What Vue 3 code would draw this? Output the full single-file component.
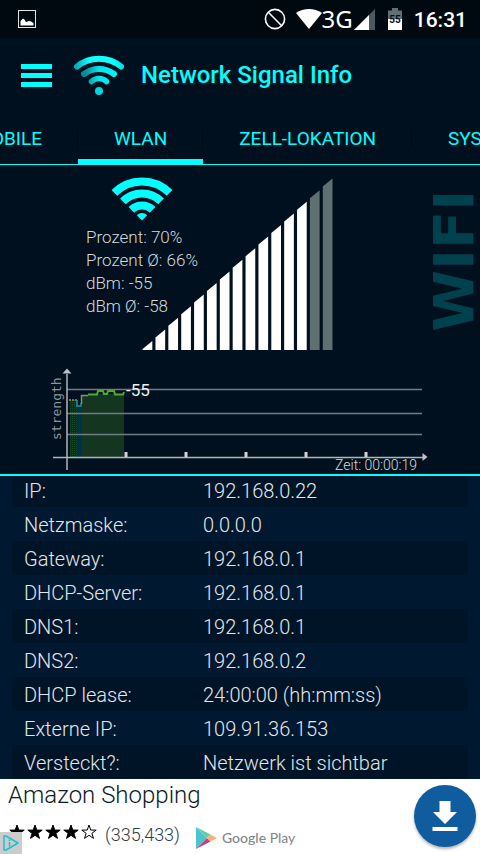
<template>
  <div class="app">
    <div class="status-bar">
      <svg class="status-picture" width="18" height="18" viewBox="0 0 18 18">
        <rect x="0.5" y="0.5" width="17" height="17" fill="none" stroke="#dfe5e8" />
        <path d="M2.500 15.500V11L5 8.500L6.500 9.500L8 12L11 11L13 11.500L15.500 13V15.500Z" fill="#fff" />
      </svg>
      <div class="status-right">
        <svg class="no-calls" width="22" height="22" viewBox="0 0 22 22" fill="none" stroke="#fff" stroke-width="1.6">
          <circle cx="11" cy="11" r="9.6" />
          <path d="M4.3 4.3L17.7 17.7" />
        </svg>
        <svg class="status-wifi" width="26" height="22" viewBox="0 0 26 22">
          <path d="M0 5C7.500 -0.500 18.500 -0.500 26 5L13 21Z" fill="#fff" />
        </svg>
        <span class="network-type">3G</span>
        <svg class="cell" width="21" height="21" viewBox="0 0 21 21">
          <path d="M0 21L21 0V21Z" fill="#4c5860" />
          <path d="M0 21L15 6V21Z" fill="#fff" />
        </svg>
        <svg class="battery" width="14" height="22" viewBox="0 0 14 22">
          <path d="M0 2.500H4V0H10V2.500H14V11H0Z" fill="#607074" />
          <rect y="11" width="14" height="11" fill="#fff" />
          <text x="7" y="15" text-anchor="middle">55</text>
        </svg>
        <span class="clock">16:31</span>
      </div>
    </div>

    <header class="header">
      <button class="menu-btn" aria-label="Menü">
        <span></span>
        <span></span>
        <span></span>
      </button>
      <svg class="logo" width="52" height="42" viewBox="0 0 52 42" fill="none" stroke-linecap="round">
        <defs>
          <linearGradient id="arc" gradientUnits="userSpaceOnUse" x1="2" y1="0" x2="50" y2="0">
            <stop offset="0" stop-color="#00a9b2" />
            <stop offset="0.3" stop-color="#1ff" />
            <stop offset="0.8" stop-color="#1ff" />
            <stop offset="1" stop-color="#00e0e6" />
          </linearGradient>
          <linearGradient id="arcInner" gradientUnits="userSpaceOnUse" x1="9" y1="0" x2="43" y2="0">
            <stop offset="0.1" stop-color="#008f99" />
            <stop offset="0.5" stop-color="#00e8ee" />
            <stop offset="1" stop-color="#00f4fa" />
          </linearGradient>
        </defs>
        <path d="M4 12.500A35 35 0 0 1 48 12.500" stroke="url(#arc)" stroke-width="6" />
        <path d="M11 20A25 25 0 0 1 41 20" stroke="url(#arcInner)" stroke-width="6" />
        <path d="M18.500 27.500A11 11 0 0 1 33.500 27.500" stroke="url(#arcInner)" stroke-width="5.500" />
        <circle cx="26" cy="37" r="4" fill="#00d5dd" />
      </svg>
      <h1 class="title">Network Signal Info</h1>
    </header>

    <nav class="tabs">
      <button
        v-for="tab in tabs"
        :key="tab"
        class="tab"
        :class="{ active: tab === activeTab }"
        @click="activeTab = tab"
      >{{ tab }}</button>
    </nav>

    <section class="signal">
      <div class="signal-top">
        <svg class="signal-bars" width="192" height="173" viewBox="0 0 192 173">
          <polygon v-for="bar in bars" :key="bar.id" :points="bar.points" :fill="bar.on ? '#fff' : '#5f7072'" />
        </svg>
        <div class="signal-info">
          <svg class="wifi-icon" width="62" height="44" viewBox="0 0 62 44" fill="none" stroke="#0ff">
            <path d="M3.400 15.900A39 39 0 0 1 58.600 15.900" stroke-width="8" />
            <path d="M11.900 24.400A27 27 0 0 1 50.100 24.400" stroke-width="8" />
            <path d="M20.400 32.900A15 15 0 0 1 41.600 32.900" stroke-width="8" />
            <path d="M31 43.500L25.800 38.300A7.300 7.300 0 0 1 36.200 38.300Z" fill="#0ff" stroke="none" />
          </svg>
          <p v-for="line in readings" :key="line">{{ line }}</p>
        </div>
        <span class="type-label">WIFI</span>
      </div>

      <svg class="graph" width="480" height="118" viewBox="0 0 480 118">
        <defs>
          <pattern id="dots" width="2" height="2" patternUnits="userSpaceOnUse">
            <rect width="2" height="2" fill="#0c2c22" />
            <rect width="1" height="1" fill="#1c4a2c" />
          </pattern>
        </defs>
        <rect x="70" y="44" width="7" height="57" fill="url(#dots)" />
        <rect x="77" y="50" width="5" height="51" fill="#003246" />
        <path d="M82 101V40H88L90 38H124V101Z" fill="#143621" />
        <g stroke="#6f7d82" stroke-width="1.500">
          <path d="M67 33.500H422M67 57.500H422M67 78.500H422" />
        </g>
        <path d="M69 44H77" stroke="#8a9a50" stroke-width="1.500" stroke-dasharray="2 1" />
        <path d="M77 44V50H81V47" fill="none" stroke="#1695a5" stroke-width="1.500" />
        <path d="M81.500 48V39.500H88" fill="none" stroke="#7b9478" stroke-width="1.500" />
        <path d="M88 38.500H97L98 35H103L104 38H107L108 35H114L115 38.500H123L124 36" fill="none" stroke="#4cab2b" stroke-width="2" />
        <g stroke="#aeb6b8" stroke-width="1.500" fill="none">
          <path d="M67 18V114" />
          <path d="M53 101.500H424" />
        </g>
        <path d="M67 12.500L71.500 17.500H62.500Z" fill="#bdc3c5" />
        <path d="M427.500 101L422.500 97V105Z" fill="#bdc3c5" />
        <path d="M126 96V101M186 96V101M246 96V101M306 96V101M366 96V101" stroke="#cfd3d5" stroke-width="3" />
        <text class="axis-label" transform="translate(61 84) rotate(-90)">strength</text>
        <text class="current" x="126" y="40">-55</text>
        <text class="time" x="417" y="114" text-anchor="end">Zeit: 00:00:19</text>
      </svg>
    </section>

    <main class="details">
      <table>
        <tbody>
          <tr v-for="row in details" :key="row.label">
            <th scope="row">{{ row.label }}:</th>
            <td>{{ row.value }}</td>
          </tr>
        </tbody>
      </table>
    </main>

    <footer class="ad">
      <div class="ad-body">
        <a class="ad-title" href="#">Amazon Shopping</a>
        <div class="ad-meta">
          <svg class="stars" width="90" height="18" viewBox="0 0 90 18">
            <path
              v-for="n in 5"
              :key="n"
              :transform="`translate(${(n - 1) * 18} 0)`"
              d="M9 2L10.800 7.100H16.200L11.900 10.300L13.500 15.400L9 12.300L4.500 15.400L6.100 10.300L1.800 7.100H7.200Z"
              :fill="n <= 4 ? '#000' : 'none'"
              stroke="#000"
            />
          </svg>
          <span class="votes">(335,433)</span>
          <svg class="play-icon" width="22" height="24" viewBox="0 0 22 24">
            <path d="M1 1L12 12L1 23Z" fill="#4cc3d0" />
            <path d="M1 1L15.500 8.500L12 12Z" fill="#67c9a5" />
            <path d="M1 23L12 12L15.500 15.500Z" fill="#c0437a" />
            <path d="M12 12L15.500 8.500L22 12L15.500 15.500Z" fill="#fbaf7c" />
          </svg>
          <span class="store"><b>Google</b> Play</span>
        </div>
      </div>
      <button class="download-btn" aria-label="Installieren">
        <svg width="26" height="30" viewBox="0 0 26 30" fill="#fff">
          <path d="M7.500 0H18.500V11H25L13 23L1 11H7.500Z" />
          <rect x="0.500" y="26" width="25" height="4" />
        </svg>
      </button>
      <a class="ad-choices" href="#" aria-label="AdChoices">
        <svg width="16" height="16" viewBox="0 0 16 16" fill="none" stroke="#1cc0ce" stroke-width="1.500" stroke-linejoin="round">
          <path d="M1 1H3L15 8L3 15H1Z" />
          <path d="M6.500 7V11.500M6.500 4.500V6" />
        </svg>
      </a>
    </footer>
  </div>
</template>

<script setup>
import { ref } from 'vue'

const tabs = ['MOBILE', 'WLAN', 'ZELL-LOKATION', 'SYSTEM']
const activeTab = ref('WLAN')

const readings = ['Prozent: 70%', 'Prozent Ø: 66%', 'dBm: -55', 'dBm Ø: -58']

// 15 bars, the last two are off
const bars = Array.from({ length: 15 }, (_, i) => {
  const right = 11.3 + i * 12.87
  const left = right - 9.7
  const top = 163 - i * 11.6
  return {
    id: i,
    on: i < 13,
    points: `${left},172 ${left},${top + 8} ${right},${top} ${right},172`
  }
})

const details = [
  { label: 'IP', value: '192.168.0.22' },
  { label: 'Netzmaske', value: '0.0.0.0' },
  { label: 'Gateway', value: '192.168.0.1' },
  { label: 'DHCP-Server', value: '192.168.0.1' },
  { label: 'DNS1', value: '192.168.0.1' },
  { label: 'DNS2', value: '192.168.0.2' },
  { label: 'DHCP lease', value: '24:00:00 (hh:mm:ss)' },
  { label: 'Externe IP', value: '109.91.36.153' },
  { label: 'Versteckt?', value: 'Netzwerk ist sichtbar' }
]
</script>

<style>
body { margin: 0; background: #001830; }
</style>

<style scoped>
.app {
  min-height: 100vh;
  display: flex;
  flex-direction: column;
  background: #00101e;
  color: #e4e7e9;
  font-family: Roboto, "Liberation Sans", sans-serif;
  overflow: hidden;
}
button {
  border: none;
  background: none;
  padding: 0;
  font-family: inherit;
  cursor: pointer;
}
svg { display: block; flex-shrink: 0; }

.status-bar {
  height: 38px;
  padding: 0 13px 0 18px;
  display: flex;
  justify-content: space-between;
  align-items: center;
  background: #000910;
  color: #fff;
}
.status-right { display: flex; align-items: center; }
.status-wifi { margin-left: 10px; }
.network-type {
  font-family: "Noto Sans", "Open Sans", sans-serif;
  font-size: 24px;
  line-height: 36px;
}
.cell { margin-left: 1px; }
.battery { margin: 0 12px 0 13px; }
.battery text { font-size: 10px; font-weight: 700; fill: #00101e; }
.clock { padding-top: 2px; font-size: 21px; font-weight: 500; line-height: 36px; }

.header {
  height: 74px;
  padding-left: 21px;
  display: flex;
  align-items: center;
}
.menu-btn { width: 31px; display: grid; gap: 4px; }
.menu-btn span { height: 5px; background: #0ff; }
.logo { margin-left: 21px; }
.title {
  margin: 0 0 0 16px;
  font-size: 24px;
  font-weight: 500;
  line-height: 32px;
  color: #0ff;
}

.tabs {
  height: 52px;
  display: flex;
  border-bottom: 1px solid #0ff;
}
.tab {
  flex: none;
  padding: 2px 36px 0;
  font-size: 19px;
  line-height: 50px;
  color: #0ff;
  background: linear-gradient(#000a14, #000a14) right 18px / 1px 18px no-repeat;
}
.tab:first-child {
  width: 78px;
  padding-left: 0;
  display: flex;
  justify-content: flex-end;
  overflow: hidden;
}
.tab.active { box-shadow: inset 0 -5px #0ff; }

.signal { border-bottom: 2px solid #0ff; }
.signal-top {
  height: 191px;
  display: grid;
  grid-template-columns: 247px 1fr;
  padding-left: 86px;
}
.signal-bars {
  grid-area: 1 / 1;
  justify-self: end;
  margin-top: 13px;
}
.signal-info {
  grid-area: 1 / 1;
  padding-top: 12px;
  font-size: 17px;
  font-weight: 300;
  line-height: 23px;
}
.signal-info p { margin: 0; color: #d5dadd; }
.wifi-icon { margin: 0 0 5px 25px; }
.type-label {
  grid-area: 1 / 2;
  justify-self: end;
  align-self: center;
  writing-mode: vertical-rl;
  transform: rotate(180deg);
  font-family: "DejaVu Sans", sans-serif;
  font-size: 56px;
  font-weight: 700;
  line-height: 52px;
  color: #00414e;
}
.axis-label { font-family: "DejaVu Sans Mono", monospace; font-size: 13px; fill: #8a959a; }
.current { font-size: 17px; fill: #eef0f1; }
.time { font-size: 14px; font-weight: 300; fill: #d5dadd; }

.details {
  padding: 0 12px;
  background: #001830;
  overflow: hidden;
}
.details table {
  width: 100%;
  margin-top: -3px;
  border-collapse: collapse;
  font-size: 20px;
  line-height: 32px;
}
.details tr:nth-child(odd) { background: #001427; }
.details th,
.details td {
  padding: 2px 0 0;
  text-align: left;
  font-weight: 300;
}
.details th { width: 179px; padding-left: 12px; }

.ad {
  position: relative;
  flex: 1;
  min-height: 75px;
  padding: 0 4px 0 8px;
  display: flex;
  justify-content: space-between;
  align-items: flex-start;
  background: #fff;
  color: #0b1a24;
}
.ad-title {
  font-size: 24px;
  font-weight: 300;
  line-height: 32px;
  color: inherit;
  text-decoration: none;
}
.ad-meta {
  height: 40px;
  display: flex;
  align-items: center;
  padding-top: 8px;
  box-sizing: border-box;
}
.stars { margin-bottom: 6px; }
.votes { margin-left: 7px; font-size: 18px; font-weight: 300; line-height: 24px; color: #333d44; }
.play-icon { margin: 6px 0 0 15px; }
.store {
  margin: 6px 0 0 5px;
  font-family: Lato, sans-serif;
  font-size: 14px;
  line-height: 20px;
  color: #80868b;
}
.store b { font-weight: 500; }
.download-btn {
  width: 62px;
  height: 62px;
  margin-top: 6px;
  border-radius: 50%;
  display: flex;
  align-items: center;
  justify-content: center;
  background: #0f5c9e;
  box-shadow: 0 2px 3px rgba(0, 0, 0, 0.3);
}
.ad-choices {
  position: absolute;
  left: 0;
  bottom: 0;
  width: 22px;
  height: 22px;
  display: flex;
  align-items: center;
  justify-content: center;
  background: #ccc;
}
</style>
